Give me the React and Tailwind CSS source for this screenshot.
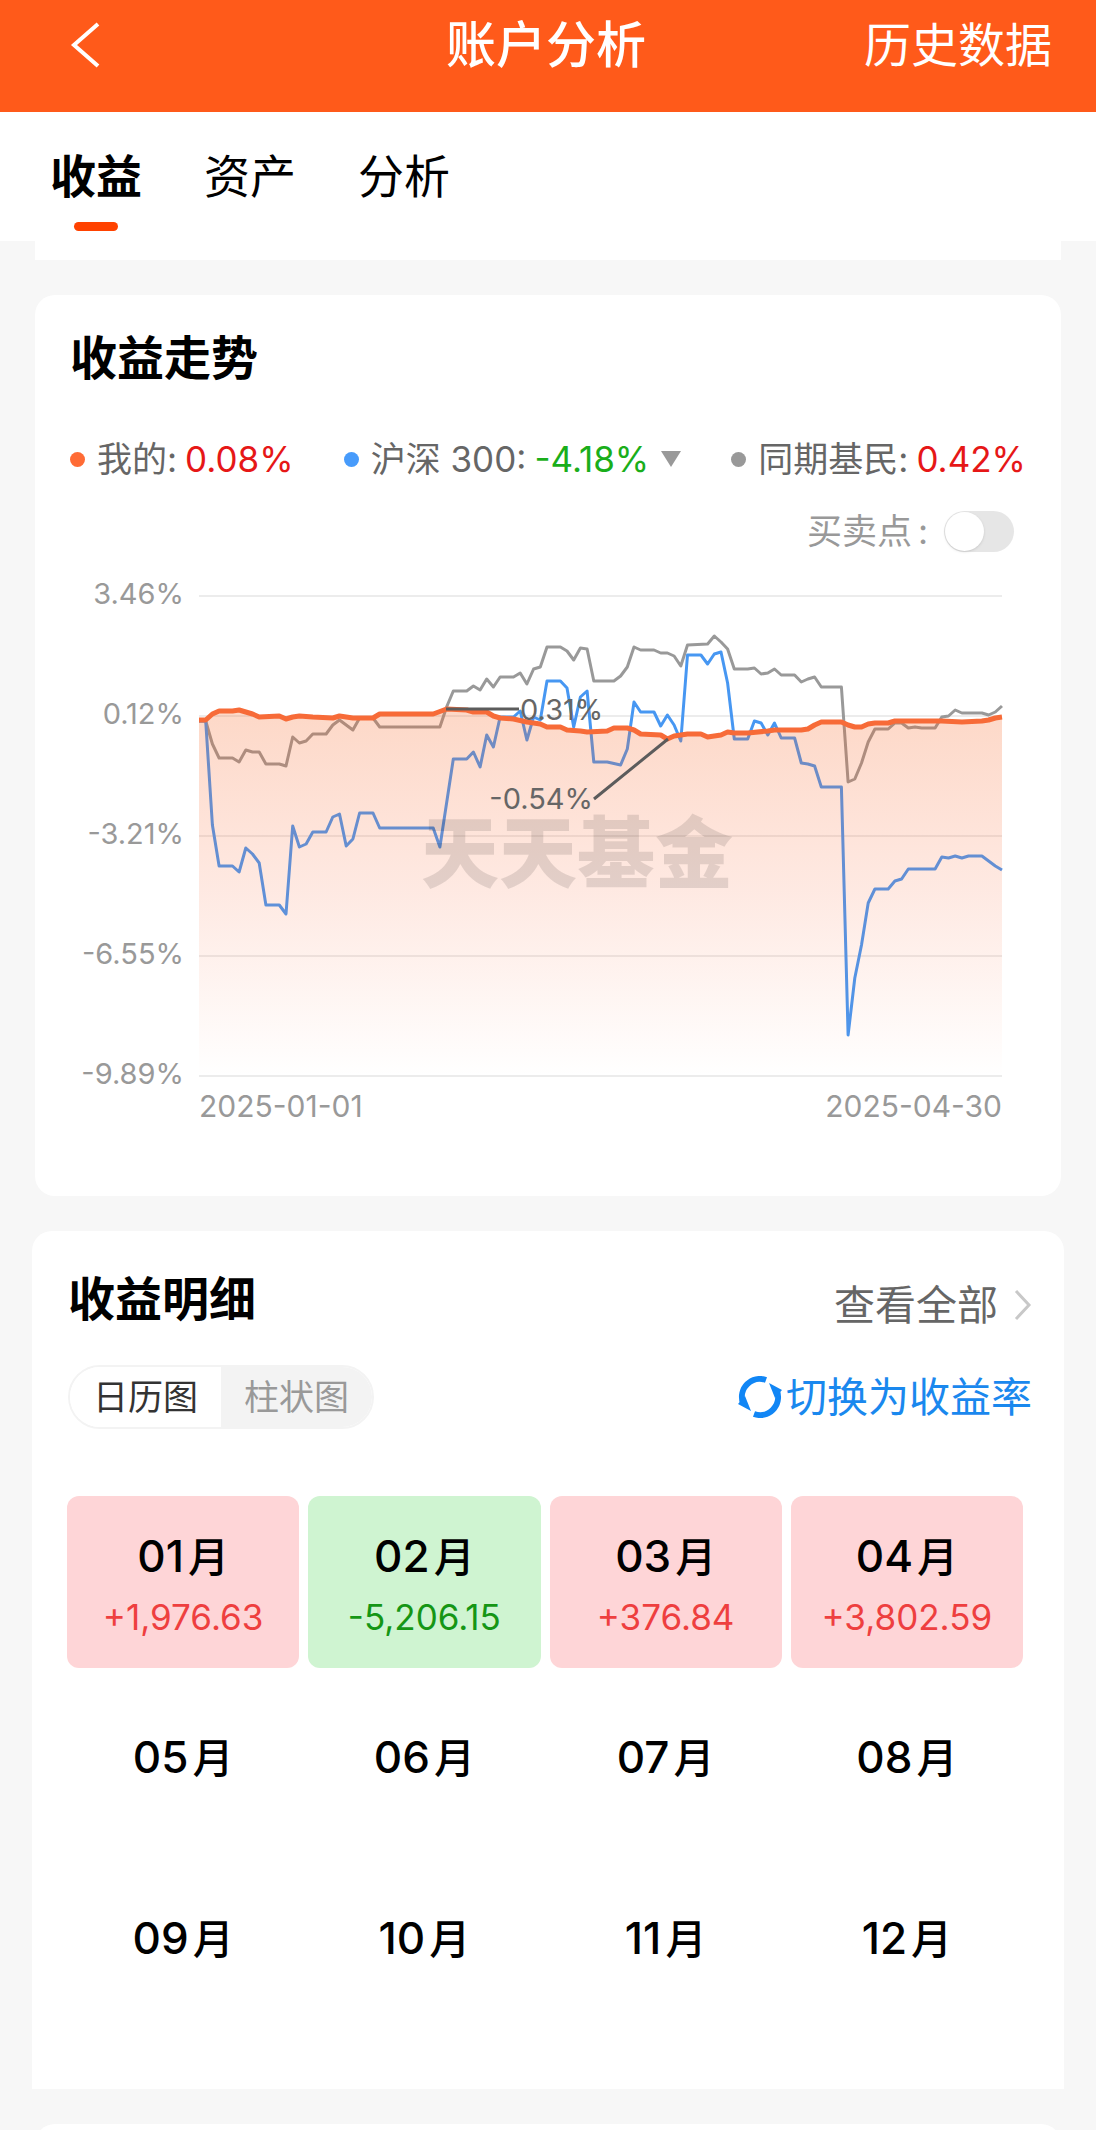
import React, { useState } from "react";
import clsx from "clsx";

const tabs = ["收益", "资产", "分析"];
const views = ["日历图", "柱状图"];
const yLabels = ["3.46%", "0.12%", "-3.21%", "-6.55%", "-9.89%"];

const months = [
  { name: "01", amount: 1976.63 },
  { name: "02", amount: -5206.15 },
  { name: "03", amount: 376.84 },
  { name: "04", amount: 3802.59 },
  { name: "05" },
  { name: "06" },
  { name: "07" },
  { name: "08" },
  { name: "09" },
  { name: "10" },
  { name: "11" },
  { name: "12" },
];

// every point is [day, y], a missing day is a straight line
const mine = [
  [0, 124], [1, 124], [2, 118], [3, 115], [5, 115], [6, 114], [7, 116], [8, 118], [9, 121], [12, 120],
  [13, 123], [14, 121], [15, 120], [17, 121], [20, 122], [21, 120], [22, 121], [23, 122], [26, 122],
  [27, 118], [35, 118], [37, 113], [40, 114], [41, 116], [43, 116], [44, 120], [45, 122], [47, 123],
  [49, 126], [51, 128], [52, 131], [54, 131], [55, 134], [57, 135], [58, 136], [61, 135], [62, 132],
  [64, 132], [65, 134], [66, 138], [69, 139], [70, 143], [71, 140], [73, 138], [75, 138], [76, 141],
  [78, 139], [79, 136], [80, 137], [82, 137], [85, 135], [86, 134], [90, 134], [91, 133], [92, 129],
  [93, 126], [96, 126], [97, 129], [98, 131], [99, 131], [100, 128], [101, 127], [103, 127], [104, 125],
  [111, 125], [114, 126], [117, 125], [118, 124], [119, 122], [120, 121],
];

const index300 = [
  [0, 125], [1, 125], [2, 229], [3, 270], [5, 270], [6, 276], [7, 252], [8, 258], [9, 267], [10, 309],
  [12, 309], [13, 318], [14, 230], [15, 251], [16, 248], [17, 236], [19, 236], [20, 221], [21, 218],
  [22, 250], [23, 243], [24, 217], [26, 217], [27, 232], [35, 232], [36, 251], [38, 163], [40, 163],
  [41, 156], [42, 171], [43, 139], [44, 151], [45, 121], [47, 121], [48, 115], [49, 144], [50, 121],
  [51, 124], [52, 85], [54, 85], [55, 92], [56, 131], [57, 101], [58, 95], [59, 166], [61, 166],
  [63, 169], [64, 153], [65, 106], [66, 116], [68, 116], [69, 130], [70, 119], [71, 129], [72, 145],
  [73, 59], [75, 59], [76, 68], [77, 58], [78, 56], [79, 87], [80, 143], [82, 143], [83, 125],
  [84, 127], [85, 139], [86, 127], [87, 142], [89, 142], [90, 167], [91, 168], [92, 170], [93, 191],
  [96, 191], [97, 439], [98, 382], [99, 349], [100, 307], [101, 293], [103, 293], [104, 285],
  [105, 283], [106, 273], [110, 273], [111, 261], [112, 262], [113, 260], [114, 262], [115, 260],
  [117, 260], [118, 265], [119, 270], [120, 274],
];

const others = [
  [0, 125], [1, 125], [2, 148], [3, 162], [5, 162], [6, 166], [7, 154], [8, 156], [9, 156], [10, 168],
  [12, 168], [13, 170], [14, 141], [15, 147], [16, 145], [17, 138], [19, 138], [20, 129], [21, 124],
  [22, 129], [23, 134], [24, 122], [26, 122], [27, 131], [36, 131], [37, 111], [38, 95], [40, 95],
  [41, 90], [42, 94], [43, 83], [44, 91], [45, 81], [47, 81], [48, 77], [49, 88], [50, 73], [51, 71],
  [52, 51], [54, 51], [55, 55], [56, 64], [57, 52], [58, 53], [59, 85], [62, 85], [63, 80], [64, 71],
  [65, 51], [66, 54], [68, 54], [69, 57], [70, 57], [71, 60], [72, 70], [73, 49], [76, 48], [77, 40],
  [78, 46], [79, 53], [80, 73], [82, 73], [83, 72], [84, 78], [85, 77], [86, 73], [87, 79], [89, 79],
  [90, 86], [91, 83], [92, 81], [93, 91], [96, 91], [97, 186], [98, 183], [99, 167], [100, 146],
  [101, 133], [103, 133], [104, 127], [105, 127], [106, 132], [107, 131], [108, 132], [110, 132],
  [111, 121], [112, 120], [113, 114], [114, 117], [117, 117], [118, 119], [119, 116], [120, 110],
];

const toPath = (points) =>
  "M" + points.map(([day, y]) => `${((day * 803) / 120).toFixed(1)} ${y}`).join("L");

const formatAmount = (n) =>
  (n > 0 ? "+" : "-") +
  Math.abs(n).toLocaleString("en-US", { minimumFractionDigits: 2 });

function TrendChart() {
  return (
    <svg viewBox="0 0 803 480" className="mt-[18px] mb-[14px] min-w-0 flex-1 overflow-visible" fill="none">
      <defs>
        <linearGradient id="area" x1="0" y1="113" x2="0" y2="480" gradientUnits="userSpaceOnUse">
          <stop offset="0" stopColor="#f7631f" stopOpacity="0.25" />
          <stop offset="0.5" stopColor="#fa6432" stopOpacity="0.14" />
          <stop offset="1" stopColor="#fa6432" stopOpacity="0" />
        </linearGradient>
      </defs>
      {[0, 120, 240, 360, 480].map((y) => (
        <path key={y} d={`M0 ${y}H803`} stroke="#ececec" strokeWidth="2" />
      ))}
      <g strokeWidth="3" strokeLinejoin="round">
        <path d={toPath(others)} stroke="#999999" />
        <path d={toPath(index300)} stroke="#4797f2" />
      </g>
      <path d={`${toPath(mine)}V480H0Z`} fill="url(#area)" />
      <path d={toPath(mine)} stroke="#f76b38" strokeWidth="5" strokeLinejoin="round" />
      <text
        x="222"
        y="286"
        fontSize="78"
        fontWeight="900"
        fill="#000000"
        fillOpacity="0.11"
        className="font-['Noto_Sans_CJK_SC',sans-serif]"
      >
        天天基金
      </text>
      <path d="M247 113H320M395 203L469 143" stroke="#5c5c5c" strokeWidth="3" />
      <g fontSize="29" fill="#666666">
        <text x="321" y="124">0.31%</text>
        <text x="394" y="213" textAnchor="end">-0.54%</text>
      </g>
    </svg>
  );
}

function SwapIcon() {
  return (
    <svg viewBox="0 0 44 42" className="h-[42px] w-11" fill="none">
      <path d="M28 4A18 18 0 0 0 5 27" stroke="#1186f5" strokeWidth="6" />
      <path d="M16 38A18 18 0 0 0 39 15" stroke="#1186f5" strokeWidth="6" />
      <path d="M0 28L13 35L7 20ZM44 14L31 7L37 22Z" fill="#1186f5" />
    </svg>
  );
}

function Legend({ dot, label, value, color, children }) {
  return (
    <div className="flex items-center">
      <span className={clsx("mr-3 size-[15px] rounded-full", dot)} />
      <span className="mr-2 text-[#666666]">{label}</span>
      <span className={color}>{value}</span>
      {children}
    </div>
  );
}

function Month({ name, amount }) {
  return (
    <div
      className={clsx(
        "h-[172px] rounded-xl text-center",
        amount === undefined ? "pt-[50px]" : "pt-[30px]",
        amount > 0 && "bg-[#fed5d7]",
        amount < 0 && "bg-[#cff4d1]"
      )}
    >
      <div className="text-[44px] leading-[60px] font-medium text-black">
        {name}
        <span className="ml-1 text-[41px]">月</span>
      </div>
      {amount !== undefined && (
        <div className={clsx("text-[35px] leading-[60px]", amount > 0 ? "text-[#ee3f3f]" : "text-[#159615]")}>
          {formatAmount(amount)}
        </div>
      )}
    </div>
  );
}

export default function App() {
  const [tab, setTab] = useState("收益");
  const [view, setView] = useState("日历图");
  const [showTrades, setShowTrades] = useState(false);

  return (
    <div className="bg-[#f7f7f7] font-['Inter','Noto_Sans_CJK_SC',sans-serif]">
      <header className="grid h-28 grid-cols-3 items-center bg-[#ff5a1a] pr-11 pb-[22px] pl-[70px] text-white">
        <button aria-label="返回" className="justify-self-start">
          <svg viewBox="0 0 32 48" className="h-12 w-8" fill="none">
            <path d="M28 3L4 24L28 45" stroke="currentColor" strokeWidth="4" />
          </svg>
        </button>
        <h1 className="-ml-[30px] text-center text-[50px] leading-[60px] font-medium whitespace-nowrap">账户分析</h1>
        <a href="#history" className="justify-self-end text-[47px] leading-[60px] whitespace-nowrap">
          历史数据
        </a>
      </header>

      <nav className="flex h-[129px] gap-[62px] bg-white pt-10 pl-[50px]">
        {tabs.map((t) => (
          <button key={t} onClick={() => setTab(t)} className="flex flex-col items-center text-black">
            <span className={clsx("text-[46px] leading-[48px]", t === tab && "font-bold")}>{t}</span>
            {t === tab && <span className="mt-[22px] h-[9px] w-11 rounded-full bg-[#ff4200]" />}
          </button>
        ))}
      </nav>
      <div className="mx-[35px] h-[19px] bg-white" />

      <section className="mx-[35px] mt-[35px] rounded-[20px] bg-white px-[35px] pt-[38px] pb-[74px]">
        <h2 className="text-[47px] leading-[50px] font-bold text-black">收益走势</h2>
        <div className="mt-14 flex justify-between text-[35px] leading-10 whitespace-nowrap">
          <Legend dot="bg-[#ff6b35]" label="我的:" value="0.08%" color="text-[#e61717]" />
          <Legend dot="bg-[#479bfb]" label="沪深 300:" value="-4.18%" color="text-[#1aae1a]">
            <button aria-label="选择指数" className="ml-3">
              <svg viewBox="0 0 20 16" className="h-4 w-5">
                <path d="M0 0H20L10 16Z" fill="#999999" />
              </svg>
            </button>
          </Legend>
          <Legend dot="bg-[#999999]" label="同期基民:" value="0.42%" color="text-[#e61717]" />
        </div>
        <label className="mt-8 flex h-[41px] items-center justify-end pr-3 text-[35px] text-[#999999]">
          <span className="mr-4 flex gap-1.5">
            买卖点<span>:</span>
          </span>
          <input
            type="checkbox"
            checked={showTrades}
            onChange={(e) => setShowTrades(e.target.checked)}
            className="peer sr-only"
          />
          <span className="flex h-[41px] w-[70px] rounded-full bg-[#e6e6e6] p-px peer-checked:justify-end peer-checked:bg-[#ff5a1a]">
            <span className="size-[39px] rounded-full bg-white shadow" />
          </span>
        </label>
        <div className="mt-[26px] flex pr-6 text-[29px] leading-8 text-[#999999]">
          <div className="mr-[15px] flex w-[114px] flex-col justify-between text-right">
            {yLabels.map((label) => (
              <span key={label}>{label}</span>
            ))}
          </div>
          <TrendChart />
        </div>
        <div className="flex justify-between pr-6 pl-[129px] text-[30px] leading-8 text-[#999999]">
          <span>2025-01-01</span>
          <span>2025-04-30</span>
        </div>
      </section>

      <section className="mx-8 mt-[35px] rounded-t-[20px] bg-white pt-[37px] pb-[59px]">
        <div className="flex items-center justify-between pr-8 pl-9">
          <h2 className="text-[47px] leading-[50px] font-bold text-black">收益明细</h2>
          <a href="#all" className="flex items-center gap-4 pt-3 text-[41px] leading-[50px] text-[#666666]">
            查看全部
            <svg viewBox="0 0 18 32" className="h-8 w-[18px]" fill="none">
              <path d="M2 2L15 16L2 30" stroke="#c8c8c8" strokeWidth="3" />
            </svg>
          </a>
        </div>
        <div className="mt-[35px] flex items-center justify-between pr-8 pl-9">
          <div className="flex h-16 overflow-hidden rounded-full border-2 border-[#f3f3f3] text-[35px]">
            {views.map((v) => (
              <button
                key={v}
                onClick={() => setView(v)}
                className={clsx(
                  "w-[151px]",
                  v === view ? "bg-white text-[#333333]" : "bg-[#f3f3f3] text-[#999999]"
                )}
              >
                {v}
              </button>
            ))}
          </div>
          <button className="flex items-center gap-1 text-[41px] leading-[50px] text-[#1a88ee]">
            <SwapIcon />
            切换为收益率
          </button>
        </div>
        <div className="mt-[67px] grid grid-cols-4 gap-[9px] pr-[41px] pl-[35px]">
          {months.map((m) => (
            <Month key={m.name} {...m} />
          ))}
        </div>
      </section>

      <div className="mx-[35px] mt-[35px] h-1.5 overflow-hidden">
        <div className="h-10 rounded-[20px] bg-white" />
      </div>
    </div>
  );
}
